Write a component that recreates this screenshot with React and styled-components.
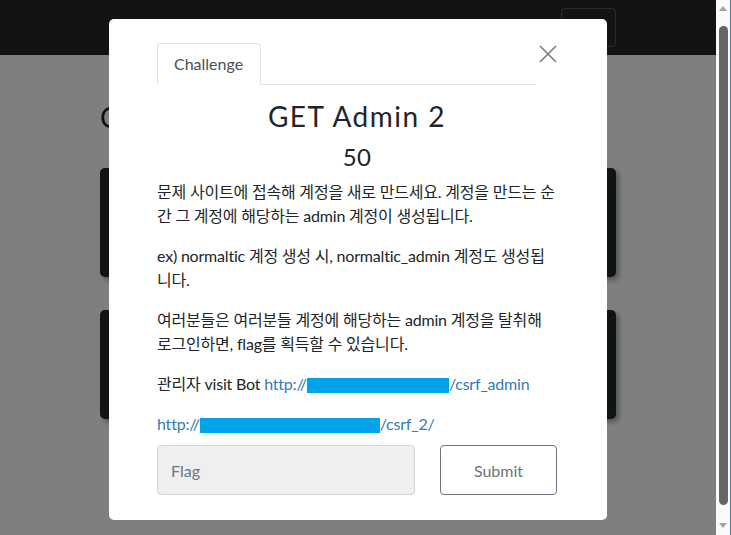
import React from 'react';
import styled, { createGlobalStyle } from 'styled-components';

const GlobalStyle = createGlobalStyle`
  html, body {
    margin: 0;
    padding: 0;
    background: #ffffff;
    font-family: Lato, "Noto Sans CJK KR", sans-serif;
    color: #212529;
    overflow: hidden;
  }
`;

const Window = styled.div`
  display: flex;
  height: 100vh;
`;

const Viewport = styled.div`
  flex: 1;
  position: relative;
  overflow: hidden;
`;

const ScrollBar = styled.div`
  width: 15px;
  box-sizing: border-box;
  background: #fafafa;
  border-right: 1px solid #5b7896;
  display: flex;
  flex-direction: column;
  align-items: center;
  padding: 6px 0 7px;
`;

const Arrow = styled.div`
  width: 0;
  height: 0;
  border-left: 4.5px solid transparent;
  border-right: 4.5px solid transparent;
  ${p => (p.down ? 'border-top' : 'border-bottom')}: 5px solid #a3a3a3;
`;

const Thumb = styled.div`
  width: 9px;
  flex: 1;
  margin: 15px 0 18px;
  border-radius: 5px;
  background: #666666;
`;

const Navbar = styled.nav`
  height: 55px;
  background: #242628;
  display: flex;
  align-items: center;
  justify-content: flex-end;
  padding: 0 100px;
`;

const NavToggle = styled.div`
  width: 55px;
  height: 39px;
  box-sizing: border-box;
  border: 1px solid #54575b;
  border-radius: 4px;
`;

const Main = styled.main`
  padding: 0 100px;
`;

const PageTitle = styled.h1`
  margin: 45px 0 0;
  height: 68px;
  font-size: 28px;
  font-weight: 400;
  color: #1c1f22;
`;

const CardGrid = styled.div`
  display: grid;
  grid-template-columns: repeat(3, 1fr);
  gap: 33px 16px;
`;

const ChallengeCard = styled.div`
  height: 109px;
  background: #242628;
  border-radius: 5px;
  box-shadow: 3px 3px 5px rgba(120, 130, 140, 0.7);
`;

const Overlay = styled.div`
  position: absolute;
  inset: 0;
  background: rgba(0, 0, 0, 0.5);
  display: flex;
  justify-content: center;
  align-items: flex-start;
`;

const Modal = styled.div`
  margin-top: 19px;
  width: 498px;
  box-sizing: border-box;
  background: #fff;
  border-radius: 5px;
  padding: 24px 50px 25px 48px;
`;

const Header = styled.div`
  display: flex;
  align-items: flex-start;
`;

const Tabs = styled.div`
  flex: 1;
  display: flex;
  border-bottom: 1px solid #dee2e6;
`;

const Tab = styled.div`
  margin-bottom: -1px;
  padding: 8px 17px 8px 16px;
  font-size: 16px;
  line-height: 24px;
  color: #495057;
  border: 1px solid #dee2e6;
  border-bottom-color: #fff;
  border-radius: 4px 4px 0 0;
  background: #fff;
`;

const CloseButton = styled.button`
  width: 21px;
  height: 22px;
  margin-top: 2px;
  padding: 0;
  border: none;
  background: none;
  display: flex;
  justify-content: flex-end;
`;

const Title = styled.h2`
  margin: 15px 0 9px;
  font-size: 28px;
  line-height: 1.2;
  font-weight: 400;
  text-align: center;
  color: #212529;
  letter-spacing: 1.5px;
`;

const Points = styled.h4`
  margin: 0 0 9px;
  font-size: 24px;
  line-height: 1.2;
  font-weight: 400;
  text-align: center;
  color: #212529;
  letter-spacing: 0.3px;
`;

const Paragraph = styled.p`
  margin: 0 0 16px;
  font-size: 16px;
  line-height: 24px;
  letter-spacing: -0.2px;
  word-break: break-all;
  color: #212529;
  &:last-of-type {
    margin-bottom: 9px;
  }
`;

const Link = styled.a`
  color: #337ab7;
  text-decoration: none;
`;

const Redacted = styled.span`
  display: inline-block;
  width: ${p => p.w}px;
  height: 15px;
  background: #00a2e8;
  vertical-align: -3px;
`;

const FlagForm = styled.div`
  display: grid;
  grid-template-columns: 258px 117px;
  gap: 25px;
`;

const FlagInput = styled.input`
  height: 50px;
  box-sizing: border-box;
  padding: 0 13px;
  border: 1px solid #d2d4d6;
  border-radius: 4px;
  background: #efefef;
  font-family: Lato, sans-serif;
  font-size: 16px;
  color: #495057;
  &::placeholder {
    color: #6c757d;
  }
`;

const SubmitButton = styled.button`
  height: 50px;
  border: 1px solid #6c757d;
  border-radius: 4px;
  background: #fff;
  font-family: Lato, sans-serif;
  font-size: 16px;
  color: #6c757d;
`;

const CloseIcon = () => (
  <svg width="18" height="18" viewBox="0 0 18 18">
    <path d="M1 1 L17 17 M17 1 L1 17" stroke="#7a7a7a" strokeWidth="1.6" fill="none" />
  </svg>
);

export default function App() {
  return (
    <>
      <GlobalStyle />
      <Window>
        <Viewport>
          <Navbar>
            <NavToggle />
          </Navbar>
          <Main>
            <PageTitle>Challenges</PageTitle>
            <CardGrid>
              {[0, 1, 2, 3, 4, 5].map(i => (
                <ChallengeCard key={i} />
              ))}
            </CardGrid>
          </Main>
          <Overlay>
            <Modal>
              <Header>
                <Tabs>
                  <Tab>Challenge</Tab>
                </Tabs>
                <CloseButton>
                  <CloseIcon />
                </CloseButton>
              </Header>
              <Title>GET Admin 2</Title>
              <Points>50</Points>
              <Paragraph>
                문제 사이트에 접속해 계정을 새로 만드세요. 계정을 만드는 순간 그 계정에 해당하는 admin 계정이 생성됩니다.
              </Paragraph>
              <Paragraph>
                ex) normaltic 계정 생성 시, normaltic_admin 계정도 생성됩니다.
              </Paragraph>
              <Paragraph>
                여러분들은 여러분들 계정에 해당하는 admin 계정을 탈취해 로그인하면, flag를 획득할 수 있습니다.
              </Paragraph>
              <Paragraph>
                관리자 visit Bot <Link href="#">http://<Redacted w={142} />/csrf_admin</Link>
              </Paragraph>
              <Paragraph>
                <Link href="#">http://<Redacted w={180} />/csrf_2/</Link>
              </Paragraph>
              <FlagForm>
                <FlagInput placeholder="Flag" />
                <SubmitButton>Submit</SubmitButton>
              </FlagForm>
            </Modal>
          </Overlay>
        </Viewport>
        <ScrollBar>
          <Arrow />
          <Thumb />
          <Arrow down />
        </ScrollBar>
      </Window>
    </>
  );
}
